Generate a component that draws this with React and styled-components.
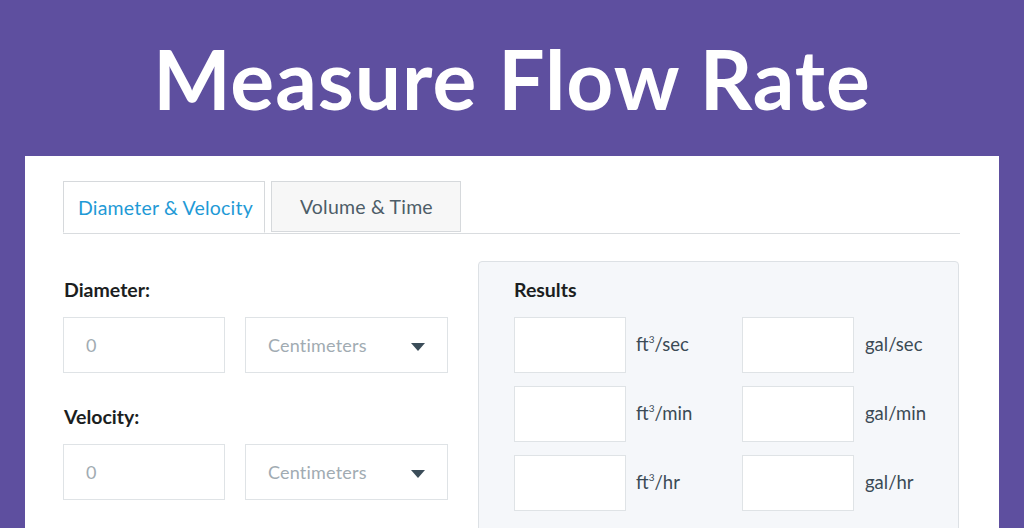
import styled, { createGlobalStyle } from 'styled-components';

const GlobalStyle = createGlobalStyle`
  html, body {
    margin: 0;
    padding: 0;
    background: #5e4f9f;
    font-family: Lato, "Noto Sans", sans-serif;
    overflow: hidden;
  }
`;

const Page = styled.div`
  width: 1024px;
  height: 528px;
  display: flex;
  flex-direction: column;
  align-items: center;
  background: #5e4f9f;
  overflow: hidden;
`;

const Title = styled.h1`
  margin: 0;
  height: 156px;
  flex-shrink: 0;
  display: flex;
  align-items: center;
  justify-content: center;
  color: #fff;
  font-family: Lato, sans-serif;
  font-weight: 700;
  font-size: 82px;
  letter-spacing: 1px;
  box-sizing: border-box;
`;

const Card = styled.div`
  width: 974px;
  flex: 1;
  min-height: 0;
  background: #fff;
  padding: 25px 39px 0 38px;
  box-sizing: border-box;
`;

const TabBar = styled.div`
  display: flex;
  gap: 6px;
  border-bottom: 1px solid #d9dcdf;
  height: 52px;
`;

const Tab = styled.div`
  height: ${(p) => (p.active ? '52px' : '51px')};
  padding: 0 ${(p) => (p.active ? '11px' : '27px')} 0 ${(p) => (p.active ? '14px' : '28px')};
  display: flex;
  align-items: center;
  border: 1px solid #d6d9dc;
  border-bottom: ${(p) => (p.active ? '1px solid #fff' : '1px solid #d6d9dc')};
  background: ${(p) => (p.active ? '#fff' : '#f7f7f7')};
  color: ${(p) => (p.active ? '#1f9ad6' : '#4d5d68')};
  font-size: 19.5px;
  letter-spacing: 0.2px;
  box-sizing: border-box;
  margin-bottom: -1px;
`;

const Content = styled.div`
  display: flex;
  gap: 30px;
  margin-top: 27px;
`;

const Inputs = styled.div`
  width: 385px;
  flex-shrink: 0;
  display: flex;
  flex-direction: column;
`;

const FieldLabel = styled.div`
  font-weight: 700;
  font-size: 19.5px;
  line-height: 20px;
  color: #1b1e21;
  margin: 19px 0 17px 1px;
  &:not(:first-child) {
    margin-top: 34px;
  }
`;

const Row = styled.div`
  display: flex;
  gap: 20px;
`;

const Box = styled.div`
  width: ${(p) => p.w}px;
  height: 56px;
  border: 1px solid #dfe3e6;
  background: #fff;
  box-sizing: border-box;
  display: flex;
  align-items: center;
  justify-content: space-between;
  padding: 0 22px 0 22px;
  color: #a1abb2;
  font-size: 18px;
  letter-spacing: 0.2px;
`;

const Arrow = styled.span`
  width: 0;
  height: 0;
  border-left: 7px solid transparent;
  border-right: 7px solid transparent;
  border-top: 8px solid #3b4d59;
  margin-top: 4px;
`;

const Results = styled.div`
  width: 481px;
  flex-shrink: 0;
  height: 290px;
  background: #f5f7fa;
  border: 1px solid #dde1e5;
  border-radius: 4px;
  padding: 18px 35px;
  box-sizing: border-box;
`;

const ResultsTitle = styled.div`
  font-weight: 700;
  font-size: 19.5px;
  line-height: 20px;
  color: #1b1e21;
  margin-bottom: 17px;
`;

const ResultGrid = styled.div`
  display: grid;
  grid-template-columns: 228px 1fr;
  row-gap: 13px;
`;

const Result = styled.div`
  display: flex;
  align-items: center;
  gap: ${(p) => p.gap}px;
`;

const ResultBox = styled.div`
  width: 112px;
  height: 56px;
  border: 1px solid #dfe3e6;
  background: #fff;
  box-sizing: border-box;
`;

const Unit = styled.span`
  font-size: 18.5px;
  color: #3b4a55;
  margin-bottom: 3px;
  sup {
    font-size: 10px;
    vertical-align: 8px;
    line-height: 0;
  }
`;

const rows = [['sec'], ['min'], ['hr']];

export default function App() {
  return (
    <Page>
      <GlobalStyle />
      <Title>Measure Flow Rate</Title>
      <Card>
        <TabBar>
          <Tab active>Diameter &amp; Velocity</Tab>
          <Tab>Volume &amp; Time</Tab>
        </TabBar>
        <Content>
          <Inputs>
            <FieldLabel>Diameter:</FieldLabel>
            <Row>
              <Box w={162}>0</Box>
              <Box w={203}>
                Centimeters <Arrow />
              </Box>
            </Row>
            <FieldLabel>Velocity:</FieldLabel>
            <Row>
              <Box w={162}>0</Box>
              <Box w={203}>
                Centimeters <Arrow />
              </Box>
            </Row>
          </Inputs>
          <Results>
            <ResultsTitle>Results</ResultsTitle>
            <ResultGrid>
              {rows.map(([t]) => [
                <Result key={'ft' + t} gap={10}>
                  <ResultBox />
                  <Unit>
                    ft<sup>3</sup>/{t}
                  </Unit>
                </Result>,
                <Result key={'gal' + t} gap={11}>
                  <ResultBox />
                  <Unit>gal/{t}</Unit>
                </Result>,
              ])}
            </ResultGrid>
          </Results>
        </Content>
      </Card>
    </Page>
  );
}
